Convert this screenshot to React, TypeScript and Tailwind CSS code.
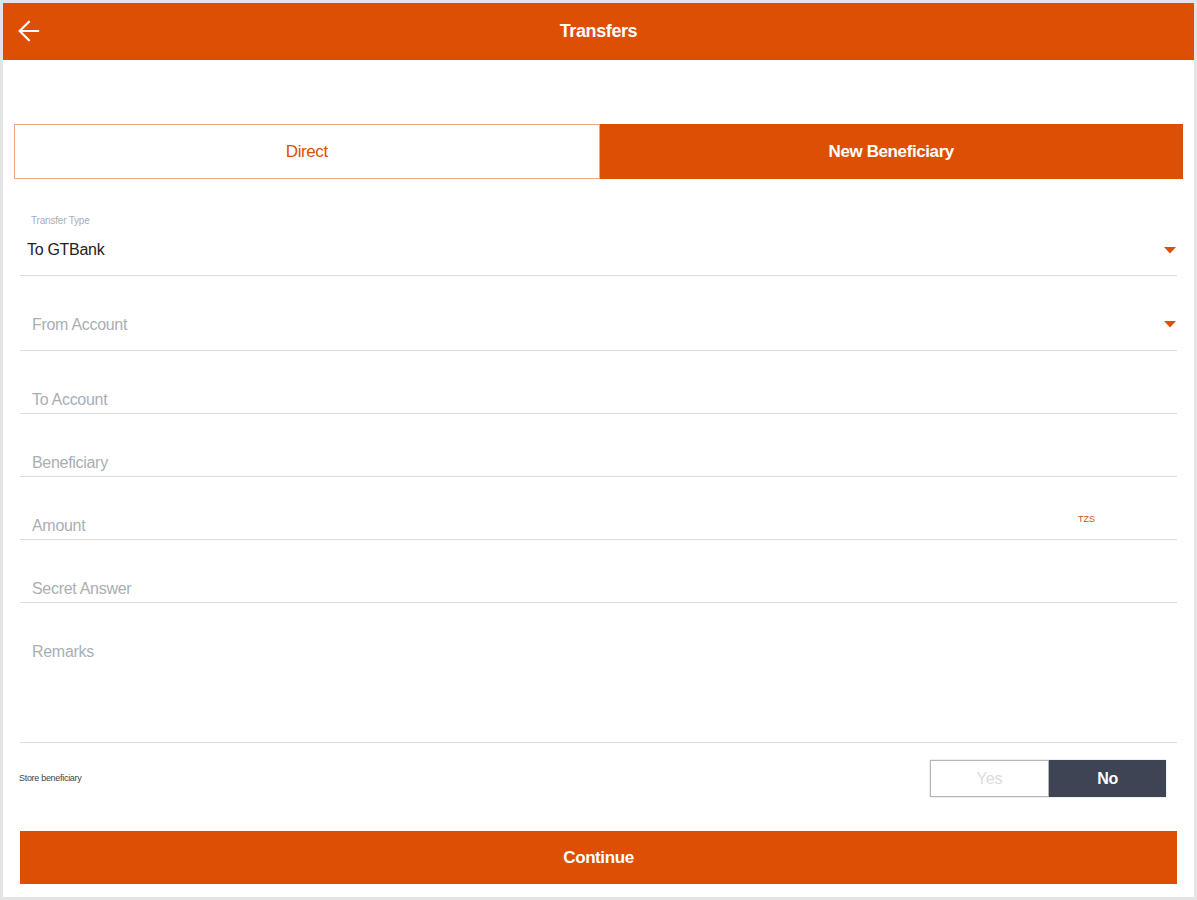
import { ArrowLeft } from 'lucide-react';

const font = { fontFamily: '"Liberation Sans", Arial, sans-serif' };

function Caret() {
  return (
    <svg width="12" height="7" viewBox="0 0 12 7" className="shrink-0">
      <path d="M0 0 H12 L6 6.5 Z" fill="#DD4F05" />
    </svg>
  );
}

function Field({ label, height = 'h-[63px]', children }: { label: string; height?: string; children?: React.ReactNode }) {
  return (
    <div className={`flex ${height} items-start border-b border-[#dcdcdc] pt-[40px] pl-[12px] pr-[6px]`}>
      <span className="flex-1 text-[16px] leading-[18px] tracking-[-0.3px] text-[#a9aeb4]">{label}</span>
      {children}
    </div>
  );
}

export default function App() {
  return (
    <div style={font} className="h-[900px] w-[1197px] border-x-[3px] border-y-[3px] border-[#e4e4e4] bg-white">
      {/* Header */}
      <div className="relative flex h-[57px] items-center justify-center bg-[#DD4F05]">
        <ArrowLeft className="absolute left-[10px] top-[12px] h-[32px] w-[32px] text-white" strokeWidth={1.6} />
        <span className="text-[18px] font-bold tracking-[-0.4px] text-white">Transfers</span>
      </div>

      <div className="px-[11px] pt-[64px]">
        {/* Tabs */}
        <div className="flex h-[55px]">
          <div className="flex flex-1 items-center justify-center border border-[#f0a487] bg-white text-[17px] tracking-[-0.4px] text-[#DD4F05]">
            Direct
          </div>
          <div className="flex flex-1 items-center justify-center bg-[#DD4F05] text-[17px] font-bold tracking-[-0.4px] text-white">
            New Beneficiary
          </div>
        </div>

        <div className="px-[6px]">
          {/* Transfer type */}
          <div className="flex h-[97px] flex-col border-b border-[#dcdcdc] pl-[11px] pr-[1px] pt-[34px]">
            <span className="text-[10px] tracking-[-0.2px] text-[#a9aeb4]">Transfer Type</span>
            <div className="mt-[10px] flex items-center">
              <span className="-ml-[4px] flex-1 text-[16px] tracking-[-0.3px] text-[#222]">To GTBank</span>
              <Caret />
            </div>
          </div>

          <div className="flex h-[75px] items-start border-b border-[#dcdcdc] pl-[12px] pr-[1px] pt-[40px]">
            <span className="flex-1 text-[16px] leading-[18px] tracking-[-0.3px] text-[#a9aeb4]">From Account</span>
            <span className="mt-[5px]"><Caret /></span>
          </div>

          <Field label="To Account" />
          <Field label="Beneficiary" />
          <Field label="Amount">
            <span className="mr-[76px] mt-[-4px] text-[9px] text-[#DD4F05]">TZS</span>
          </Field>
          <Field label="Secret Answer" />
          <Field label="Remarks" height="h-[140px]" />

          {/* Store beneficiary */}
          <div className="flex h-[71px] items-center">
            <span className="-ml-[1px] flex-1 text-[9px] tracking-[-0.3px] text-[#444]">Store beneficiary</span>
            <div className="mr-[11px] flex h-[37px] w-[236px] shadow-[0_0_1px_rgba(0,0,0,0.4)]">
              <div className="flex flex-1 items-center justify-center border border-[#b5b5b5] bg-white text-[16px] text-[#dcdcdc]">Yes</div>
              <div className="flex flex-1 items-center justify-center bg-[#3F4455] text-[16px] font-bold tracking-[-0.4px] text-white">No</div>
            </div>
          </div>

          {/* Continue */}
          <button className="mt-[17px] flex h-[53px] w-full items-center justify-center bg-[#DD4F05] text-[17px] font-bold tracking-[-0.4px] text-white">
            Continue
          </button>
        </div>
      </div>
    </div>
  );
}
